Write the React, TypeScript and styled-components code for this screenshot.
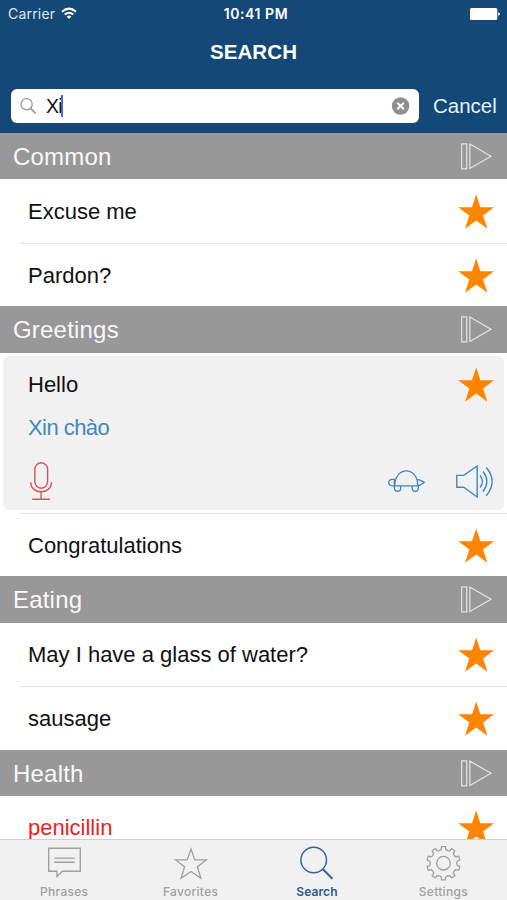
import React from "react";
import styled, { createGlobalStyle } from "styled-components";

const GlobalStyle = createGlobalStyle`
  * { box-sizing: border-box; }
  body { margin: 0; background: #fff; }
  svg { display: block; overflow: visible; flex: none; }
`;

const Screen = styled.div`
  width: 507px;
  height: 900px;
  overflow: hidden;
  display: flex;
  flex-direction: column;
  background: #fff;
  color: #111;
  font-family: "Liberation Sans", Arial, sans-serif;
`;

const Header = styled.header`
  flex: none;
  height: 133px;
  background: #144876;
  color: #fff;
`;

const StatusBar = styled.div`
  height: 28px;
  padding: 0 7px 0 8px;
  display: grid;
  grid-template-columns: 1fr auto 1fr;
  align-items: center;
  font-family: Inter, sans-serif;
  font-size: 14px;
  line-height: 28px;
`;

const Carrier = styled.div`
  display: flex;
  align-items: center;
  gap: 6px;
  color: #dce8f2;
  letter-spacing: 0.2px;
`;

const Clock = styled.div`
  font-weight: 600;
  font-size: 14px;
  letter-spacing: 0.55px;
  padding-left: 4px;
`;

const BatterySlot = styled.div`
  justify-self: end;
`;

const Title = styled.h1`
  margin: 0;
  height: 48px;
  line-height: 48px;
  text-align: center;
  font-size: 20.5px;
  letter-spacing: 0.1px;
  font-weight: 700;
`;

const SearchRow = styled.div`
  margin-top: 13px;
  padding-left: 11px;
  display: flex;
  align-items: center;
  height: 34px;
`;

const SearchField = styled.div`
  width: 408px;
  height: 34px;
  border-radius: 6px;
  background: #fff;
  display: flex;
  align-items: center;
  padding: 0 9px 0 9px;
`;

const Query = styled.span`
  margin-left: 10px;
  flex: 1;
  display: flex;
  align-items: center;
  color: #111;
  font-size: 19.5px;
  letter-spacing: -0.8px;
`;

const Caret = styled.i`
  width: 2px;
  height: 22px;
  margin-left: -1px;
  background: #4468e0;
`;

const Cancel = styled.span`
  margin-left: 14px;
  font-size: 20.5px;
  color: #e6f3fb;
`;

const List = styled.main`
  flex: 1;
  min-height: 0;
  overflow: hidden;
`;

const SectionHeader = styled.div<{ $h: number }>`
  height: ${(p) => p.$h}px;
  padding: 1px 15px 0 13px;
  display: flex;
  align-items: center;
  justify-content: space-between;
  background: #989898;
  color: #f8f8f8;
  font-size: 24px;
  letter-spacing: 0.2px;
`;

const Row = styled.div<{ $h: number; $red?: boolean }>`
  height: ${(p) => p.$h}px;
  padding: 1px 12px 0 28px;
  display: flex;
  align-items: center;
  justify-content: space-between;
  font-size: 22px;
  color: ${(p) => (p.$red ? "#ee1c1c" : "#111")};
`;

const Separator = styled.div`
  height: 1px;
  margin-left: 20px;
  background: #e2e2e2;
`;

const Card = styled.section`
  height: 154px;
  margin: 3px 3px;
  padding: 0 9px 0 25px;
  border-radius: 6px;
  background: #f1f1f1;
`;

const CardTop = styled.div`
  height: 58px;
  display: flex;
  align-items: center;
  justify-content: space-between;
  font-size: 22px;
`;

const Translation = styled.div`
  height: 27px;
  line-height: 27px;
  font-size: 22px;
  letter-spacing: -0.55px;
  color: #4487bd;
`;

const CardActions = styled.div`
  height: 69px;
  padding: 11px 1px 0 2px;
  display: flex;
  align-items: center;
`;

const PlaybackActions = styled.div`
  margin-left: auto;
  display: flex;
  align-items: center;
  gap: 31px;
`;

const TabBar = styled.nav`
  flex: none;
  height: 61px;
  border-top: 1px solid #cfcfcf;
  background: #f1f1f1;
  display: grid;
  grid-template-columns: repeat(4, 126.4px);
  padding-left: 1px;
`;

const Tab = styled.div<{ $active?: boolean }>`
  display: flex;
  flex-direction: column;
  align-items: center;
  padding-top: 5px;
  color: ${(p) => (p.$active ? "#285a8a" : "#a0a0a0")};
  font-family: Inter, sans-serif;
  font-size: 12px;
  font-weight: ${(p) => (p.$active ? 600 : 500)};
  line-height: 16px;
  letter-spacing: ${(p) => (p.$active ? 0.1 : 0.3)}px;
`;

const TabIcon = styled.div`
  height: 39px;
`;

const Star = () => (
  <svg width="37" height="36" viewBox="0 0 37 36">
    <path d="M18.2 .5 22.4 13.3H36.1L25.1 21.5 29.4 34.7 18.2 26.5 7 34.7 11.3 21.5.3 13.3H14Z" fill="#ff8500" />
  </svg>
);

const PlayIcon = () => (
  <svg width="31" height="28" viewBox="0 0 31 28" fill="none" stroke="#e4e4e4" strokeWidth="1.2">
    <path d="M.7 .8H5.7V25.8H.7ZM8.8 1.1V25.4L30 13.3Z" />
  </svg>
);

const WifiIcon = () => (
  <svg width="16" height="12" viewBox="0 0 16 12" fill="none" stroke="#fff" strokeWidth="2">
    <path d="M1 3.7Q8-2.5 15 3.7M3.7 6.6Q8 2.9 12.3 6.6" />
    <path d="M5.6 8.5 8 11.1 10.4 8.5Q8 6.7 5.6 8.5Z" fill="#fff" stroke="none" />
  </svg>
);

const BatteryIcon = () => (
  <svg width="30" height="13" viewBox="0 0 30 13" fill="#fff">
    <rect x="0" y="0" width="27.3" height="12" rx="1.5" />
    <path d="M28.2 4.3Q30 4.7 30 6T28.2 7.7Z" />
  </svg>
);

const SearchGlyph = () => (
  <svg width="16" height="16" viewBox="0 0 16 16" fill="none" stroke="#999" strokeWidth="1.3">
    <circle cx="6.6" cy="6.3" r="5.6" />
    <path d="M10.6 10.3 15.6 15.3" strokeWidth="1.7" />
  </svg>
);

const ClearIcon = () => (
  <svg width="18" height="18" viewBox="0 0 18 18">
    <circle cx="8.6" cy="9" r="8.7" fill="#8e8e93" />
    <path d="M5.3 5.7 11.9 12.3M11.9 5.7 5.3 12.3" stroke="#fff" strokeWidth="2" />
  </svg>
);

const MicIcon = () => (
  <svg width="22" height="38" viewBox="0 0 22 38" fill="none" stroke="#d95454" strokeWidth="1.4">
    <rect x="4.8" y=".8" width="12.8" height="25.4" rx="6.4" />
    <path d="M.8 20.2C.8 33 21.4 33 21.4 20.2M11.1 30V37M2.2 37.2H20" />
  </svg>
);

const TurtleIcon = () => (
  <svg width="37" height="22" viewBox="0 0 37 22" fill="none" stroke="#4286bd" strokeWidth="1.3">
    <path d="M6.8 15.8C6.8-4.2 29.8-4.2 29.8 15.8ZM6.8 9.4H4C-.4 9.4-.4 15.8 4 15.8H6.8M6.3 9.4V15.8M29.5 9.6C32.8 9.6 34.3 11.4 36.2 12.3 34.3 13.7 32.8 15.8 29.5 15.8" />
    <path d="M6.5 15.8V18C6.5 22.3 12.7 22.3 12.7 18V15.8M24.2 15.8V18C24.2 22.3 30.3 22.3 30.3 18V15.8" />
  </svg>
);

const SpeakerIcon = () => (
  <svg width="38" height="33" viewBox="0 0 38 33" fill="none" stroke="#4286bd" strokeWidth="1.4">
    <path d="M.8 10.4H7.7L21.2 1V32L7.7 22.3H.8Z" />
    <path d="M24.1 10.5Q28.7 16.4 24.1 22.5M27 6.5Q34.7 16.4 27 26.7M30.3 2.5Q42 16.4 30.3 30.7" />
  </svg>
);

const PhrasesIcon = () => (
  <svg width="33" height="31" viewBox="0 0 33 31" fill="none" stroke="#a0a0a0" strokeWidth="1.4">
    <path d="M.7 3.2H32.3V26.3H14.3L9 31.5V26.3H.7ZM6.3 13.1H26.8M6.3 17.2H26.8" />
  </svg>
);

const FavoritesIcon = () => (
  <svg width="34" height="33" viewBox="0 0 34 33" fill="none" stroke="#a0a0a0" strokeWidth="1.3">
    <path d="M17 4 20.8 14.9H32.4L23.4 21.7 26.9 33.2 17 26.5 7.1 33.2 10.6 21.7 1.6 14.9H13.2Z" />
  </svg>
);

const SearchIcon = () => (
  <svg width="33" height="33" viewBox="0 0 33 33" fill="none" stroke="#356696" strokeWidth="1.5">
    <circle cx="13.7" cy="15" r="12.8" />
    <path d="M22.9 24.3 32.4 33.8" strokeWidth="2" />
  </svg>
);

const gearOutline = (() => {
  const pts: string[] = [];
  for (let i = 0; i < 10; i++) {
    const steps: [number, number][] = [[-7, 16.8], [7, 16.8], [9, 13.9], [18, 13.2], [27, 13.9]];
    for (const [offset, radius] of steps) {
      const a = ((i * 36 + offset - 90) * Math.PI) / 180;
      pts.push(`${(17.5 + radius * Math.cos(a)).toFixed(2)} ${(18.2 + radius * Math.sin(a)).toFixed(2)}`);
    }
  }
  return `M${pts.join("L")}Z`;
})();

const SettingsIcon = () => (
  <svg width="35" height="35" viewBox="0 0 35 35" fill="none" stroke="#a0a0a0" strokeWidth="1.3" strokeLinejoin="round">
    <path d={gearOutline} />
    <circle cx="17.5" cy="18.2" r="6.8" />
  </svg>
);

const Section = ({ name, h }: { name: string; h: number }) => (
  <SectionHeader $h={h}>
    <span>{name}</span>
    <PlayIcon />
  </SectionHeader>
);

const Phrase = ({ text, h, red }: { text: string; h: number; red?: boolean }) => (
  <Row $h={h} $red={red}>
    <span>{text}</span>
    <Star />
  </Row>
);

export default function App() {
  return (
    <>
      <GlobalStyle />
      <Screen>
        <Header>
          <StatusBar>
            <Carrier>
              Carrier
              <WifiIcon />
            </Carrier>
            <Clock>10:41 PM</Clock>
            <BatterySlot>
              <BatteryIcon />
            </BatterySlot>
          </StatusBar>
          <Title>SEARCH</Title>
          <SearchRow>
            <SearchField>
              <SearchGlyph />
              <Query>
                Xi
                <Caret />
              </Query>
              <ClearIcon />
            </SearchField>
            <Cancel>Cancel</Cancel>
          </SearchRow>
        </Header>
        <List>
          <Section name="Common" h={46} />
          <Phrase text="Excuse me" h={64} />
          <Separator />
          <Phrase text="Pardon?" h={62} />
          <Section name="Greetings" h={47} />
          <Card>
            <CardTop>
              <span>Hello</span>
              <Star />
            </CardTop>
            <Translation>Xin chào</Translation>
            <CardActions>
              <MicIcon />
              <PlaybackActions>
                <TurtleIcon />
                <SpeakerIcon />
              </PlaybackActions>
            </CardActions>
          </Card>
          <Separator />
          <Phrase text="Congratulations" h={62} />
          <Section name="Eating" h={47} />
          <Phrase text="May I have a glass of water?" h={63} />
          <Separator />
          <Phrase text="sausage" h={63} />
          <Section name="Health" h={46} />
          <Phrase text="penicillin" h={63} red />
        </List>
        <TabBar>
          <Tab>
            <TabIcon><PhrasesIcon /></TabIcon>
            Phrases
          </Tab>
          <Tab>
            <TabIcon><FavoritesIcon /></TabIcon>
            Favorites
          </Tab>
          <Tab $active>
            <TabIcon><SearchIcon /></TabIcon>
            Search
          </Tab>
          <Tab>
            <TabIcon><SettingsIcon /></TabIcon>
            Settings
          </Tab>
        </TabBar>
      </Screen>
    </>
  );
}
